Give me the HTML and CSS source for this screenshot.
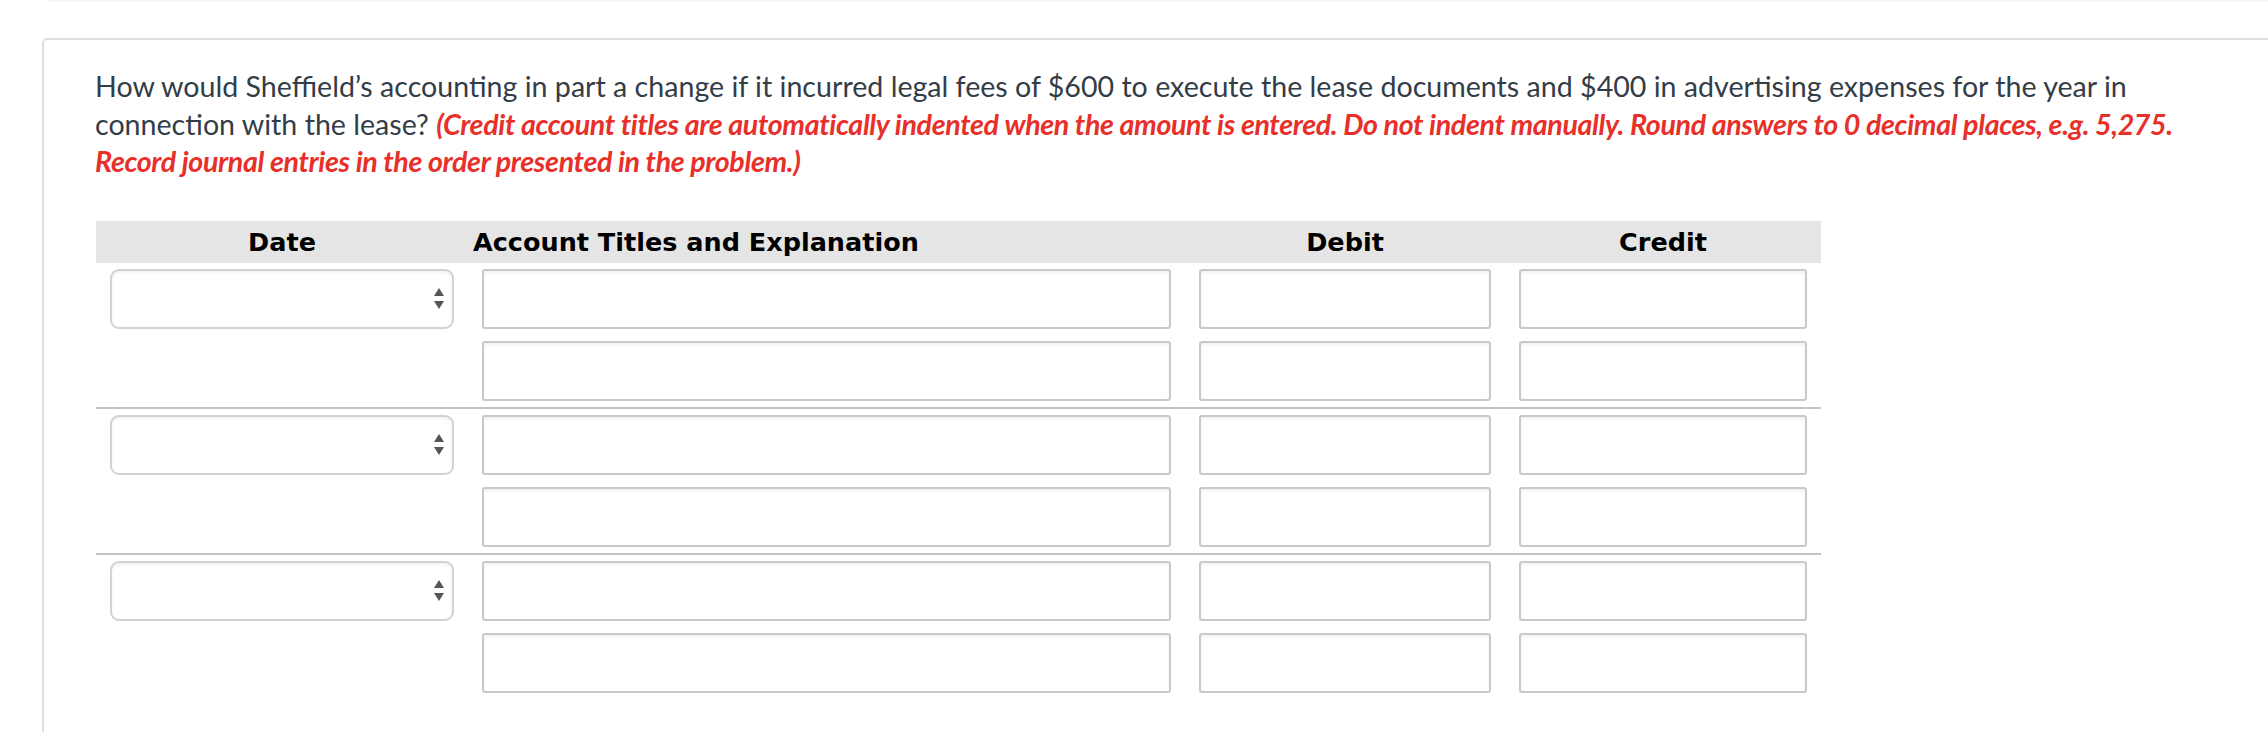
FILE: index.html
```html
<!DOCTYPE html>
<html lang="en">
<head>
<meta charset="utf-8">
<title>Journal entry</title>
<link rel="stylesheet" href="styles.css">
</head>
<body>
<div class="prev"></div>
<div class="card">
  <p class="question">How would Sheffield’s accounting in part a change if it incurred legal fees of $600 to execute the lease documents and $400 in advertising expenses for the year in<br>connection with the lease? <em class="note">(Credit account titles are automatically indented when the amount is entered. Do not indent manually. Round answers to 0 decimal places, e.g. 5,275.<br>Record journal entries in the order presented in the problem.)</em></p>

  <div class="journal">
    <div class="jrow head">
      <div class="hc center">Date</div>
      <div class="hc acct">Account Titles and Explanation</div>
      <div class="hc center">Debit</div>
      <div class="hc center">Credit</div>
    </div>

    <div class="entry">
      <div class="jrow">
        <div class="c"><div class="sel"><select></select><svg class="arrows" viewBox="0 0 10 22" width="10" height="22"><path d="M0 8 L5 0 L10 8 Z M0 13 L10 13 L5 21 Z" fill="#555"/></svg></div></div>
        <div class="c"><input type="text"></div>
        <div class="c"><input type="text"></div>
        <div class="c"><input type="text"></div>
      </div>
      <div class="jrow">
        <div class="c"></div>
        <div class="c"><input type="text"></div>
        <div class="c"><input type="text"></div>
        <div class="c"><input type="text"></div>
      </div>
    </div>

    <div class="entry">
      <div class="jrow">
        <div class="c"><div class="sel"><select></select><svg class="arrows" viewBox="0 0 10 22" width="10" height="22"><path d="M0 8 L5 0 L10 8 Z M0 13 L10 13 L5 21 Z" fill="#555"/></svg></div></div>
        <div class="c"><input type="text"></div>
        <div class="c"><input type="text"></div>
        <div class="c"><input type="text"></div>
      </div>
      <div class="jrow">
        <div class="c"></div>
        <div class="c"><input type="text"></div>
        <div class="c"><input type="text"></div>
        <div class="c"><input type="text"></div>
      </div>
    </div>

    <div class="entry last">
      <div class="jrow">
        <div class="c"><div class="sel"><select></select><svg class="arrows" viewBox="0 0 10 22" width="10" height="22"><path d="M0 8 L5 0 L10 8 Z M0 13 L10 13 L5 21 Z" fill="#555"/></svg></div></div>
        <div class="c"><input type="text"></div>
        <div class="c"><input type="text"></div>
        <div class="c"><input type="text"></div>
      </div>
      <div class="jrow">
        <div class="c"></div>
        <div class="c"><input type="text"></div>
        <div class="c"><input type="text"></div>
        <div class="c"><input type="text"></div>
      </div>
    </div>
  </div>
</div>
</body>
</html>
```

FILE: styles.css
```css
html, body {
  margin: 0;
  padding: 0;
  background: #ffffff;
}

body {
  font-family: Lato, "Noto Sans", sans-serif;
  color: #333d47;
  overflow: hidden;
}

.prev {
  height: 2px;
  margin-left: 47px;
  background: #f6f6f6;
}

.card {
  margin: 36px -40px 0 42px;
  border: 2px solid #dedede;
  border-radius: 5px;
  padding: 28px 0 80px 51px;
}

.question {
  margin: 0;
  font-size: 28.6px;
  line-height: 37.5px;
  white-space: nowrap;
}

.note {
  color: #e8302a;
  font-weight: 700;
  font-style: italic;
  letter-spacing: -0.35px;
}

.journal {
  margin-top: 40px;
  width: 1725px;
  margin-left: 1px;
}

.jrow {
  display: grid;
  grid-template-columns: 372px 717px 320px 316px;
}

.head {
  height: 42px;
  background: #e5e5e5;
  align-items: center;
  font-family: "DejaVu Sans", Verdana, sans-serif;
  font-weight: 700;
  font-size: 25.5px;
  color: #000;
}

.hc.center {
  text-align: center;
}

.hc.acct {
  padding-left: 5px;
}

.entry {
  border-bottom: 2px solid #c4c4c4;
}

.entry.last {
  border-bottom: none;
}

.entry .jrow {
  padding: 6px 0;
}

.c {
  padding: 0 14px;
  height: 60px;
}

input[type="text"] {
  display: block;
  box-sizing: border-box;
  width: 100%;
  height: 60px;
  margin: 0;
  border: 2px solid #c9c9c9;
  border-radius: 3px;
  background: #fff;
  box-shadow: inset 0 2px 3px rgba(0, 0, 0, 0.06);
  outline: none;
}

.sel {
  position: relative;
  height: 60px;
}

.sel select {
  display: block;
  box-sizing: border-box;
  width: 100%;
  height: 60px;
  margin: 0;
  border: 2px solid #d2d2d2;
  border-radius: 9px;
  background: #fff;
  box-shadow: inset 0 2px 3px rgba(0, 0, 0, 0.05);
  -webkit-appearance: none;
  appearance: none;
  outline: none;
}

.arrows {
  position: absolute;
  right: 10px;
  top: 19px;
  pointer-events: none;
}
```
